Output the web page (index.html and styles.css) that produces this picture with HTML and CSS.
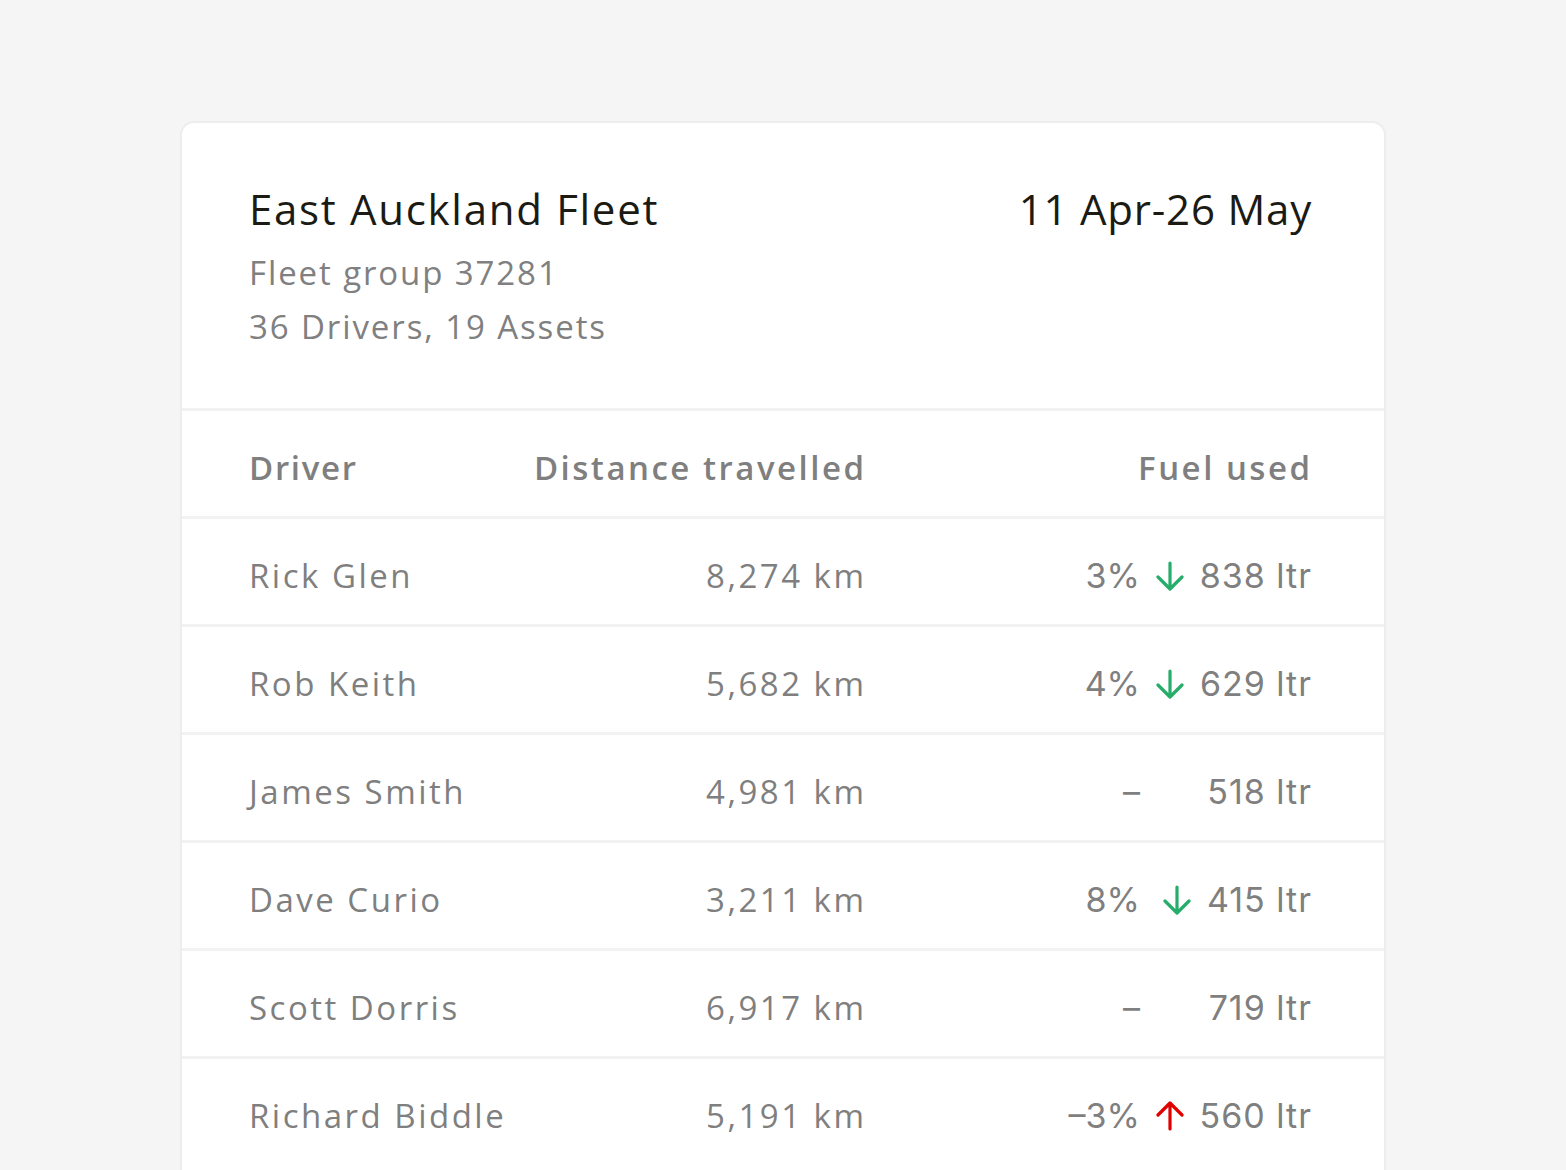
FILE: index.html
```html
<!DOCTYPE html>
<html lang="en">
<head>
<meta charset="utf-8">
<title>East Auckland Fleet</title>
<link rel="stylesheet" href="styles.css">
</head>
<body>
<main class="card">
  <header class="card-head">
    <div class="fleet">
      <h1 class="fleet-title">East Auckland Fleet</h1>
      <p class="fleet-meta">Fleet group 37281</p>
      <p class="fleet-meta">36 Drivers, 19 Assets</p>
    </div>
    <div class="period">11 Apr-26 May</div>
  </header>
  <div class="table">
    <div class="row row-head">
      <div class="c-name">Driver</div>
      <div class="c-dist"><span>Distance travelled</span></div>
      <div class="c-fuel-head">Fuel used</div>
    </div>
    <div class="row">
      <div class="c-name">Rick Glen</div>
      <div class="c-dist"><span>8,274 km</span></div>
      <div class="c-pct">3%</div>
      <div class="c-val"><svg class="arrow down" viewBox="0 0 28 30"><path d="M14 2V27.5M2 16L14 28L26 16"/></svg><span>838 ltr</span></div>
    </div>
    <div class="row">
      <div class="c-name">Rob Keith</div>
      <div class="c-dist"><span>5,682 km</span></div>
      <div class="c-pct">4%</div>
      <div class="c-val"><svg class="arrow down" viewBox="0 0 28 30"><path d="M14 2V27.5M2 16L14 28L26 16"/></svg><span>629 ltr</span></div>
    </div>
    <div class="row">
      <div class="c-name">James Smith</div>
      <div class="c-dist"><span>4,981 km</span></div>
      <div class="c-pct">–</div>
      <div class="c-val"><span>518 ltr</span></div>
    </div>
    <div class="row">
      <div class="c-name">Dave Curio</div>
      <div class="c-dist"><span>3,211 km</span></div>
      <div class="c-pct">8%</div>
      <div class="c-val"><svg class="arrow down" viewBox="0 0 28 30"><path d="M14 2V27.5M2 16L14 28L26 16"/></svg><span>415 ltr</span></div>
    </div>
    <div class="row">
      <div class="c-name">Scott Dorris</div>
      <div class="c-dist"><span>6,917 km</span></div>
      <div class="c-pct">–</div>
      <div class="c-val"><span>719 ltr</span></div>
    </div>
    <div class="row">
      <div class="c-name">Richard Biddle</div>
      <div class="c-dist"><span>5,191 km</span></div>
      <div class="c-pct">–3%</div>
      <div class="c-val"><svg class="arrow up" viewBox="0 0 28 30"><path d="M14 28V2.5M2 14L14 2L26 14"/></svg><span>560 ltr</span></div>
    </div>
  </div>
</main>
</body>
</html>
```
FILE: styles.css
```css
html, body {
  margin: 0;
  padding: 0;
  background: #f5f5f5;
}

body {
  font-family: "Open Sans", "Liberation Sans", sans-serif;
  color: #7f7f7f;
  height: 1170px;
  overflow: hidden;
}

.card {
  box-sizing: border-box;
  width: 1206px;
  margin: 121px auto 0;
  background: #ffffff;
  border: 2px solid #ededed;
  border-radius: 14px;
  min-height: 1100px;
}

.card-head {
  display: flex;
  justify-content: space-between;
  align-items: flex-start;
  padding: 59px 73px 54px 67px;
}

.fleet-title {
  margin: 0 0 10px;
  font-size: 42px;
  line-height: 54px;
  font-weight: 500;
  letter-spacing: 1.7px;
  color: #1b1b14;
}

.fleet-meta {
  margin: 0;
  font-size: 33px;
  line-height: 54px;
  font-weight: 400;
  letter-spacing: 1.9px;
  color: #808080;
}

.period {
  font-size: 42px;
  line-height: 54px;
  font-weight: 500;
  letter-spacing: 0.8px;
  margin-right: -1px;
  color: #1b1b14;
  white-space: nowrap;
}

.row {
  box-sizing: border-box;
  display: grid;
  grid-template-columns: 333px 280px 278px 171px;
  align-items: center;
  height: 108px;
  padding: 8px 71px 0 67px;
  border-top: 3px solid #f2f2f2;
  font-size: 33px;
  letter-spacing: 2.5px;
  white-space: nowrap;
}

.row-head {
  font-weight: 600;
}

.row-head .c-name {
  letter-spacing: 1.7px;
}

.c-dist {
  display: flex;
  justify-content: flex-end;
  margin-right: -4.5px;
}

.c-dist span {
  flex: none;
}

.c-fuel-head {
  grid-column: 3 / 5;
  text-align: right;
  margin-right: -1.5px;
}

.c-pct,
.c-val {
  font-family: Inter, "Noto Sans", sans-serif;
  font-size: 34px;
}

.c-pct {
  text-align: right;
  letter-spacing: 0;
}

.c-val {
  display: flex;
  justify-content: flex-end;
  align-items: center;
  gap: 16px;
  letter-spacing: 1px;
  margin-right: -1px;
}

.arrow {
  width: 28px;
  height: 30px;
  flex: none;
  fill: none;
  stroke-width: 3.2;
  stroke-linecap: round;
  stroke-linejoin: round;
}

.arrow.down {
  stroke: #27ad6a;
}

.arrow.up {
  stroke: #e10000;
}
```
